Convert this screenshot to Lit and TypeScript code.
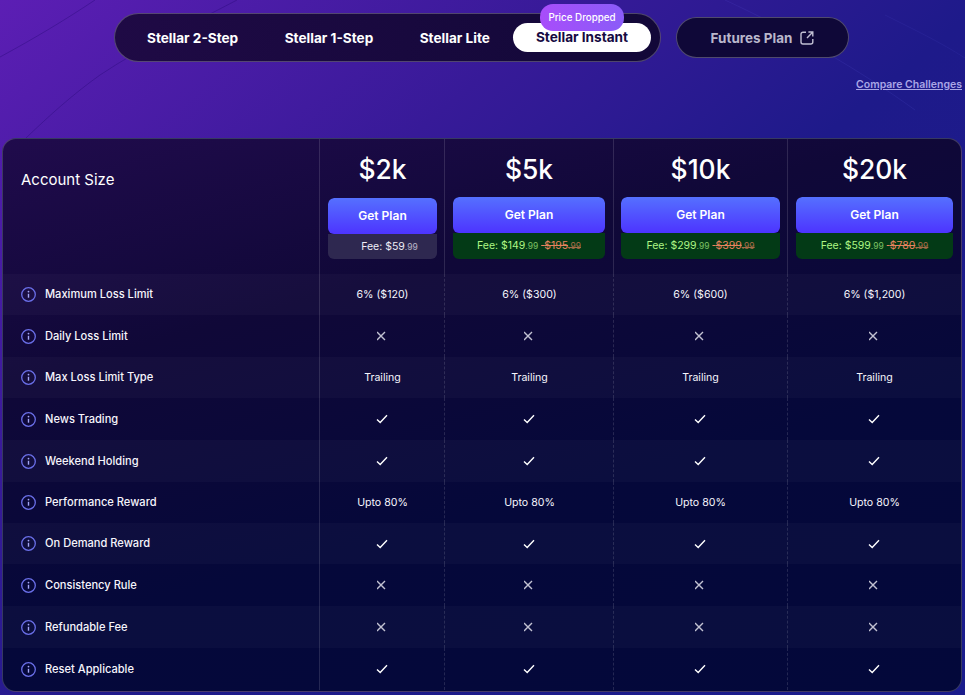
import { LitElement, html, css, svg } from "lit";
import { customElement } from "lit/decorators.js";

const plans = [
  { size: "$2k", fee: "$59", old: "" },
  { size: "$5k", fee: "$149", old: "$195" },
  { size: "$10k", fee: "$299", old: "$399" },
  { size: "$20k", fee: "$599", old: "$780" },
];

type Cell = "x" | "v" | string;
const rows: { label: string; h: number; band?: boolean; cells: Cell[] }[] = [
  { label: "Maximum Loss Limit", h: 41, band: true, cells: ["6% ($120)", "6% ($300)", "6% ($600)", "6% ($1,200)"] },
  { label: "Daily Loss Limit", h: 42, cells: ["x", "x", "x", "x"] },
  { label: "Max Loss Limit Type", h: 41, band: true, cells: ["Trailing", "Trailing", "Trailing", "Trailing"] },
  { label: "News Trading", h: 42, cells: ["v", "v", "v", "v"] },
  { label: "Weekend Holding", h: 42, band: true, cells: ["v", "v", "v", "v"] },
  { label: "Performance Reward", h: 41, cells: ["Upto 80%", "Upto 80%", "Upto 80%", "Upto 80%"] },
  { label: "On Demand Reward", h: 41, band: true, cells: ["v", "v", "v", "v"] },
  { label: "Consistency Rule", h: 42, cells: ["x", "x", "x", "x"] },
  { label: "Refundable Fee", h: 42, band: true, cells: ["x", "x", "x", "x"] },
  { label: "Reset Applicable", h: 42, cells: ["v", "v", "v", "v"] },
];

const infoIcon = svg`<svg class="info" width="15" height="15" viewBox="0 0 15 15" fill="none"><circle cx="7.5" cy="7.5" r="6.8" stroke="#6a6fe8" stroke-width="1.3"/><path d="M7.5 6.8v3.9" stroke="#a3a6f5" stroke-width="1.4"/><circle cx="7.5" cy="4.6" r=".9" fill="#a3a6f5"/></svg>`;
const xIcon = svg`<svg width="10" height="10" viewBox="0 0 10 10" fill="none"><path d="M0 1l8 8M8 1l-8 8" stroke="#c2c2d2" stroke-width="1.4"/></svg>`;
const vIcon = svg`<svg width="12" height="10" viewBox="0 0 12 10" fill="none"><path d="M1 5.4l3.2 3L11 1.2" stroke="#fff" stroke-width="1.4"/></svg>`;
const extIcon = svg`<svg width="14" height="14" viewBox="0 0 14 14" fill="none"><path d="M6 1.2H3a2 2 0 0 0-2 2v7.8a2 2 0 0 0 2 2h7.8a2 2 0 0 0 2-2V8" stroke="#c0bed2" stroke-width="1.4"/><path d="M7 7l5.6-5.8M8.4 1h4.4v4.4" stroke="#c0bed2" stroke-width="1.4"/></svg>`;

@customElement("app-root")
export class AppRoot extends LitElement {
  static styles = css`
    :host {
      display: block;
      position: relative;
      width: 965px;
      height: 695px;
      overflow: hidden;
      font-family: Inter, "Noto Sans", sans-serif;
      color: #fff;
      background: linear-gradient(140deg, #5c1eb4 0%, #371a98 32%, #1e1a8a 55%, #1a1c8c 100%);
    }
    .arcs { position: absolute; inset: 0; pointer-events: none; }
    .page { position: relative; display: flex; flex-direction: column; padding: 13px 3px 0 2px; }
    .top { display: flex; gap: 15px; margin-left: 112px; align-items: center; }
    .tabs {
      position: relative;
      display: flex;
      align-items: center;
      flex: none;
      box-sizing: border-box;
      width: 547px;
      height: 49px;
      border: 1px solid rgba(255,255,255,.25);
      border-radius: 25px;
      background: linear-gradient(100deg, #1f0a45, #120838);
      padding: 0 9px;
    }
    .tab {
      flex: none;
      padding: 0 23px;
      font-size: 13.6px;
      font-weight: 700;
      color: #fff;
      white-space: nowrap;
    }
    .tab.second, .tab.third { margin-left: 0.5px; }
    .active {
      box-sizing: border-box;
      width: 138px;
      padding: 0;
      height: 29px;
      line-height: 29px;
      text-align: center;
      margin-left: auto;
      border-radius: 15px;
      background: #fff;
      color: #150a42;
    }
    .badge {
      position: absolute;
      left: 425px;
      top: -10px;
      width: 84px;
      height: 27px;
      line-height: 27px;
      border-radius: 13px;
      background: linear-gradient(90deg, #a84dfa, #8a5cf8);
      font-size: 9.8px;
      font-weight: 500;
      text-align: center;
    }
    .futures {
      display: flex;
      align-items: center;
      justify-content: center;
      gap: 8px;
      box-sizing: border-box;
      width: 173px;
      height: 41px;
      margin-top: -1px;
      padding-top: 2px;
      border: 1px solid rgba(255,255,255,.27);
      border-radius: 21px;
      background: #0f0838;
      color: #b9b7cc;
      font-size: 13.5px;
      font-weight: 700;
    }
    .cmp-row { display: flex; justify-content: flex-end; margin-top: 16px; height: 60px; }
    .cmp { font-size: 10.5px; font-weight: 600; color: #a9a6e6; text-decoration: underline; line-height: 14px; }
    .table {
      box-sizing: border-box;
      width: 960px;
      height: 554px;
      border: 1px solid rgba(255,255,255,.2);
      border-radius: 14px;
      background: linear-gradient(165deg, #200b4c 0%, #100838 30%, #05083a 62%, #03083a 100%);
    }
    .head, .row { display: grid; grid-template-columns: 316px 125px 169px 174px 1fr; }
    .head { height: 135px; }
    .title { font-size: 15px; line-height: 17px; padding: 32px 0 0 18px; }
    .pc {
      display: flex;
      flex-direction: column;
      box-sizing: border-box;
      padding: 0 8px;
      border-left: 1px solid rgba(255,255,255,.13);
    }
    .pc.p0 { padding-right: 7px; }
    .pc.p2 { padding: 0 7px; }
    .size { font-size: 26.4px; font-weight: 500; text-align: center; line-height: 32px; margin-top: 14px; }
    .cta { display: flex; flex-direction: column; margin-top: 12px; border-radius: 6px; overflow: hidden; }
    .pc.p0 .cta { margin-top: 13px; }
    .btn {
      height: 36px;
      line-height: 36px;
      text-align: center;
      font-size: 12px;
      font-weight: 600;
      border-radius: 6px;
      background: linear-gradient(180deg, #5570ff, #4d34ff);
    }
    .fee {
      height: 26px;
      line-height: 25px;
      text-align: center;
      font-size: 10.5px;
      background: #033a16;
      color: #aef784;
      white-space: nowrap;
    }
    .fee.plain { height: 25px; padding-left: 14px; background: #2e2850; color: #f0eef8; }
    .cents { font-size: 8.5px; opacity: .7; }
    .old { color: #e7825f; text-decoration: line-through; }
    .row.band { background: rgba(255,255,255,.028); }
    .lab {
      display: flex;
      align-items: center;
      gap: 9px;
      padding-left: 18px;
      font-size: 11.1px;
      font-weight: 500;
      color: #f6f5fc;
    }
    .lab span { line-height: 14px; margin-top: -0.5px; }
    .info { flex: none; }
    .c {
      display: flex;
      align-items: center;
      justify-content: center;
      font-size: 10.6px;
      color: #f6f6fd;
      border-left: 1px dashed rgba(255,255,255,.13);
    }
    .c.first { border-left-style: solid; }
    .c svg { display: block; }
    .c.c0 span, .c.c1 span { margin-left: 1px; }
    .c.c2 svg, .c.c3 svg { margin-right: 2px; }
  `;

  private cell(v: Cell, i: number) {
    const body = v === "x" ? xIcon : v === "v" ? vIcon : html`<span>${v}</span>`;
    return html`<div class="c c${i} ${i === 0 ? "first" : ""}">${body}</div>`;
  }

  render() {
    return html`
      <svg class="arcs" width="965" height="695" viewBox="0 0 965 695" fill="none">
        <path d="M0 57C35 38 65 20 95 0" stroke="rgba(40,10,120,.4)"/>
        <path d="M26 138C50 115 72 95 100 75C145 45 190 25 237 0" stroke="rgba(40,10,120,.4)"/>
        <path d="M725 0C790 30 860 70 915 110" stroke="rgba(120,120,255,.1)"/>
        <path d="M885 15C915 30 940 42 965 58" stroke="rgba(120,120,255,.08)"/>
      </svg>
      <div class="page">
        <div class="top">
          <div class="tabs">
            <div class="tab">Stellar 2-Step</div>
            <div class="tab second">Stellar 1-Step</div>
            <div class="tab third">Stellar Lite</div>
            <div class="tab active">Stellar Instant</div>
            <div class="badge">Price Dropped</div>
          </div>
          <div class="futures">Futures Plan ${extIcon}</div>
        </div>
        <div class="cmp-row"><span class="cmp">Compare Challenges</span></div>
        <div class="table">
          <div class="head">
            <div class="title">Account Size</div>
            ${plans.map(
              (p, i) => html`<div class="pc p${i}">
                <div class="size">${p.size}</div>
                <div class="cta">
                  <div class="btn">Get Plan</div>
                  <div class="fee ${p.old ? "" : "plain"}">
                    Fee: ${p.fee}<span class="cents">.99</span>
                    ${p.old ? html`<span class="old">&nbsp;${p.old}<span class="cents">.99</span></span>` : ""}
                  </div>
                </div>
              </div>`
            )}
          </div>
          ${rows.map(
            (r) => html`<div class="row ${r.band ? "band" : ""}" style="height:${r.h}px">
              <div class="lab">${infoIcon}<span>${r.label}</span></div>
              ${r.cells.map((c, i) => this.cell(c, i))}
            </div>`
          )}
        </div>
      </div>
    `;
  }
}
